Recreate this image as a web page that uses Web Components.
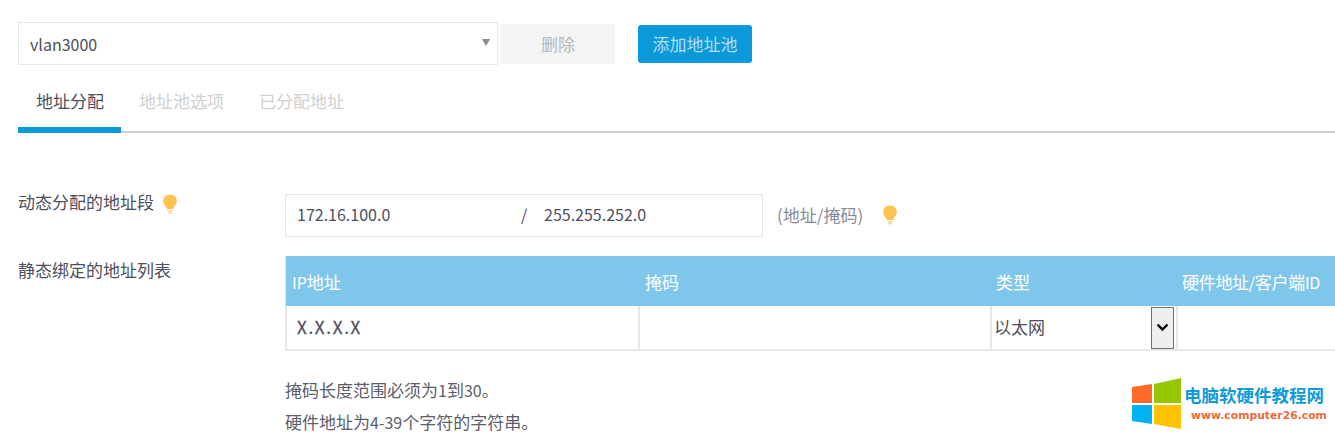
<!DOCTYPE html>
<html lang="zh">
<head>
<meta charset="utf-8">
<title>地址池</title>
<style>
html, body { margin: 0; padding: 0; background: #fff; overflow: hidden; }
body { width: 1335px; height: 435px; font-family: "Noto Sans CJK SC", "Noto Sans", sans-serif; font-size: 17px; color: #4d4f5c; }
</style>
</head>
<body>
<pool-page></pool-page>

<script>
const BULB = `<svg width="16" height="20" viewBox="0 0 16 20"><path d="M8 0.5C3.9 0.5 1.2 3.4 1.2 6.9c0 2.6 1.500 4.1 2.7 6 .5.8.8 1.5.9 2.1h6.4c.1-.6.4-1.3.9-2.1 1.2-1.9 2.7-3.4 2.7-6C14.8 3.4 12.1.5 8 .5z" fill="#fdc24f"/><path d="M5.2 16h5.6v1.4H5.2zM6 18h4l-.8 1.6H6.800z" fill="#fdd488"/></svg>`;
// latin runs sit 1px smaller than the CJK around them
const NUM = `.n { font-size: 16px; line-height: 1; }`;

class PoolToolbar extends HTMLElement {
    connectedCallback() {
        this.attachShadow({ mode: "open" });
        this.shadowRoot.innerHTML = `
            <style>
            ${NUM}
            :host { display: flex; align-items: center; height: 43px; padding-left: 18px; }
            .select { box-sizing: border-box; width: 480px; height: 43px; border: 1px solid #e8e8e8; display: flex; align-items: center; justify-content: space-between; padding: 0 7px 0 11px; }
            .arrow { width: 0; height: 0; border-left: 4px solid transparent; border-right: 4px solid transparent; border-top: 7px solid #8a8a8a; margin-bottom: 3px; }
            .del { width: 114px; height: 40px; margin-left: 3px; background: #f4f4f4; color: #b4b8bf; display: flex; align-items: center; justify-content: center; }
            .add { width: 114px; height: 38px; margin-left: 23px; background: #0b9ad9; color: #b5ddf1; border-radius: 3px; display: flex; align-items: center; justify-content: center; }
            </style>
            <div class="select"><span class="n">vlan3000</span><i class="arrow"></i></div>
            <div class="del">删除</div>
            <div class="add">添加地址池</div>
        `;
    }
}
customElements.define("pool-toolbar", PoolToolbar);

class PoolTabs extends HTMLElement {
    connectedCallback() {
        this.attachShadow({ mode: "open" });
        this.shadowRoot.innerHTML = `
            <style>
            :host { display: flex; height: 68px; margin-left: 18px; box-sizing: border-box; border-bottom: 2px solid #ccced1; }
            .tab { height: 68px; box-sizing: border-box; padding: 23px 17px 0 18px; color: #d0d0d0; line-height: 26px; }
            .on { width: 103px; padding: 23px 0 0 18px; color: #4d4f5c; border-bottom: 6px solid #0b9ad9; }
            </style>
            <div class="tab on">地址分配</div>
            <div class="tab">地址池选项</div>
            <div class="tab">已分配地址</div>
        `;
    }
}
customElements.define("pool-tabs", PoolTabs);

class FormRow extends HTMLElement {
    connectedCallback() {
        this.attachShadow({ mode: "open" });
        this.shadowRoot.innerHTML = `
            <style>
            :host { display: grid; grid-template-columns: 267px 1050px; padding-left: 18px; }
            .label { display: flex; align-items: flex-start; gap: 8px; line-height: 18px; }
            .label span { margin-top: var(--label-top, -1px); }
            svg { flex: none; }
            </style>
            <div class="label"><span>${this.getAttribute("label")}</span>${this.hasAttribute("tip") ? BULB : ""}</div>
            <div><slot></slot></div>
        `;
    }
}
customElements.define("form-row", FormRow);

class RangeInput extends HTMLElement {
    connectedCallback() {
        this.attachShadow({ mode: "open" });
        this.shadowRoot.innerHTML = `
            <style>
            ${NUM}
            :host { display: flex; align-items: center; }
            .box { box-sizing: border-box; width: 478px; height: 43px; border: 1px solid #e8e8e8; display: flex; align-items: center; padding: 0 0 3px 11px; }
            .a { width: 224px; }
            .s { width: 23px; }
            .hint { margin-left: 14px; padding-bottom: 2px; color: #858b96; }
            svg { margin-left: 19px; margin-bottom: 2px; }
            </style>
            <div class="box"><span class="n a">172.16.100.0</span><span class="n s">/</span><span class="n">255.255.252.0</span></div>
            <span class="hint">(地址/掩码)</span>${BULB}
        `;
    }
}
customElements.define("range-input", RangeInput);

class BindTable extends HTMLElement {
    connectedCallback() {
        this.attachShadow({ mode: "open" });
        this.shadowRoot.innerHTML = `
            <style>
            ${NUM}
            :host { display: block; width: 1050px; }
            .grid { display: grid; grid-template-columns: 353px 352px 186px 159px; }
            .head { height: 50px; background: #7fc7ea; color: #fff; border-left: 1px solid #d7e9f3; }
            .head div { padding: 16px 0 0 6px; line-height: 20px; }
            .head div:nth-child(3) { padding-left: 5px; }
            .head div:last-child { padding-left: 5px; white-space: nowrap; letter-spacing: -0.300px; }
            .row { height: 45px; box-sizing: border-box; border-left: 2px solid #e8e8e8; border-bottom: 2px solid #e8e8e8; }
            .row > div { box-sizing: border-box; border-right: 2px solid #e8e8e8; display: flex; align-items: center; padding: 0 0 2px 10px; }
            .row > div:last-child { border-right: 0; }
            .row .addr { letter-spacing: 1.700px; -webkit-text-stroke: 0.300px; }
            .row .type { padding: 0 0 0 2px; justify-content: space-between; }
            .type span:first-child { padding-bottom: 2px; }
            .btn { box-sizing: border-box; width: 23px; height: 42px; margin-right: 2px; border: 1px solid #707070; background: #efefef; display: flex; align-items: center; justify-content: center; }
            </style>
            <div class="grid head"><div><span class="n">IP</span>地址</div><div>掩码</div><div>类型</div><div>硬件地址<span class="n">/</span>客户端<span class="n">ID</span></div></div>
            <div class="grid row"><div class="addr">X.X.X.X</div><div></div>
                <div class="type"><span>以太网</span><span class="btn"><svg width="13" height="9" viewBox="0 0 13 9"><path d="M1.500 1.500L6.500 6.500L11.500 1.500" fill="none" stroke="#000" stroke-width="2.400"/></svg></span></div><div></div></div>
        `;
    }
}
customElements.define("bind-table", BindTable);

class PoolNotes extends HTMLElement {
    connectedCallback() {
        this.attachShadow({ mode: "open" });
        this.shadowRoot.innerHTML = `
            <style>
            ${NUM}
            :host { display: block; margin-left: 285px; padding-top: 23px; line-height: 32px; color: #5c5e69; }
            </style>
            <div>掩码长度范围必须为<span class="n">1</span>到<span class="n">30</span>。</div>
            <div>硬件地址为<span class="n">4-39</span>个字符的字符串。</div>
        `;
    }
}
customElements.define("pool-notes", PoolNotes);

class SiteMark extends HTMLElement {
    connectedCallback() {
        this.attachShadow({ mode: "open" });
        this.shadowRoot.innerHTML = `
            <style>
            :host { position: absolute; left: 1131px; top: 377px; width: 204px; height: 58px; display: flex; background: #fff; }
            svg { flex: none; }
            .t { margin-left: 3px; padding-top: 6px; }
            .cn { font: 700 17.500px/24px "Noto Sans CJK SC", sans-serif; color: #0f9ad8; white-space: nowrap; }
            .en { font: 700 10.800px/18px "DejaVu Sans", sans-serif; color: #f0693a; margin-left: 7px; white-space: nowrap; }
            </style>
            <svg width="50" height="52" viewBox="0 0 50 52"><path d="M1 10L21 7V26H1z" fill="#ff6a2b"/><path d="M23 7L50 1V26H23z" fill="#96c600"/><path d="M1 28H21V47L1 44z" fill="#00b4f1"/><path d="M23 28H50V52L23 47z" fill="#ffc400"/></svg>
            <div class="t"><div class="cn">电脑软硬件教程网</div><div class="en">www.computer26.com</div></div>
        `;
    }
}
customElements.define("site-mark", SiteMark);

class PoolPage extends HTMLElement {
    connectedCallback() {
        this.attachShadow({ mode: "open" });
        this.shadowRoot.innerHTML = `
            <style>
            :host { display: block; padding-top: 22px; }
            .rows { padding-top: 61px; }
            .second { margin-top: 19px; --label-top: 5px; }
            </style>
            <pool-toolbar></pool-toolbar>
            <pool-tabs></pool-tabs>
            <div class="rows">
                <form-row label="动态分配的地址段" tip><range-input></range-input></form-row>
                <form-row class="second" label="静态绑定的地址列表"><bind-table></bind-table></form-row>
            </div>
            <pool-notes></pool-notes>
            <site-mark></site-mark>
        `;
    }
}
customElements.define("pool-page", PoolPage);
</script>
</body>
</html>
